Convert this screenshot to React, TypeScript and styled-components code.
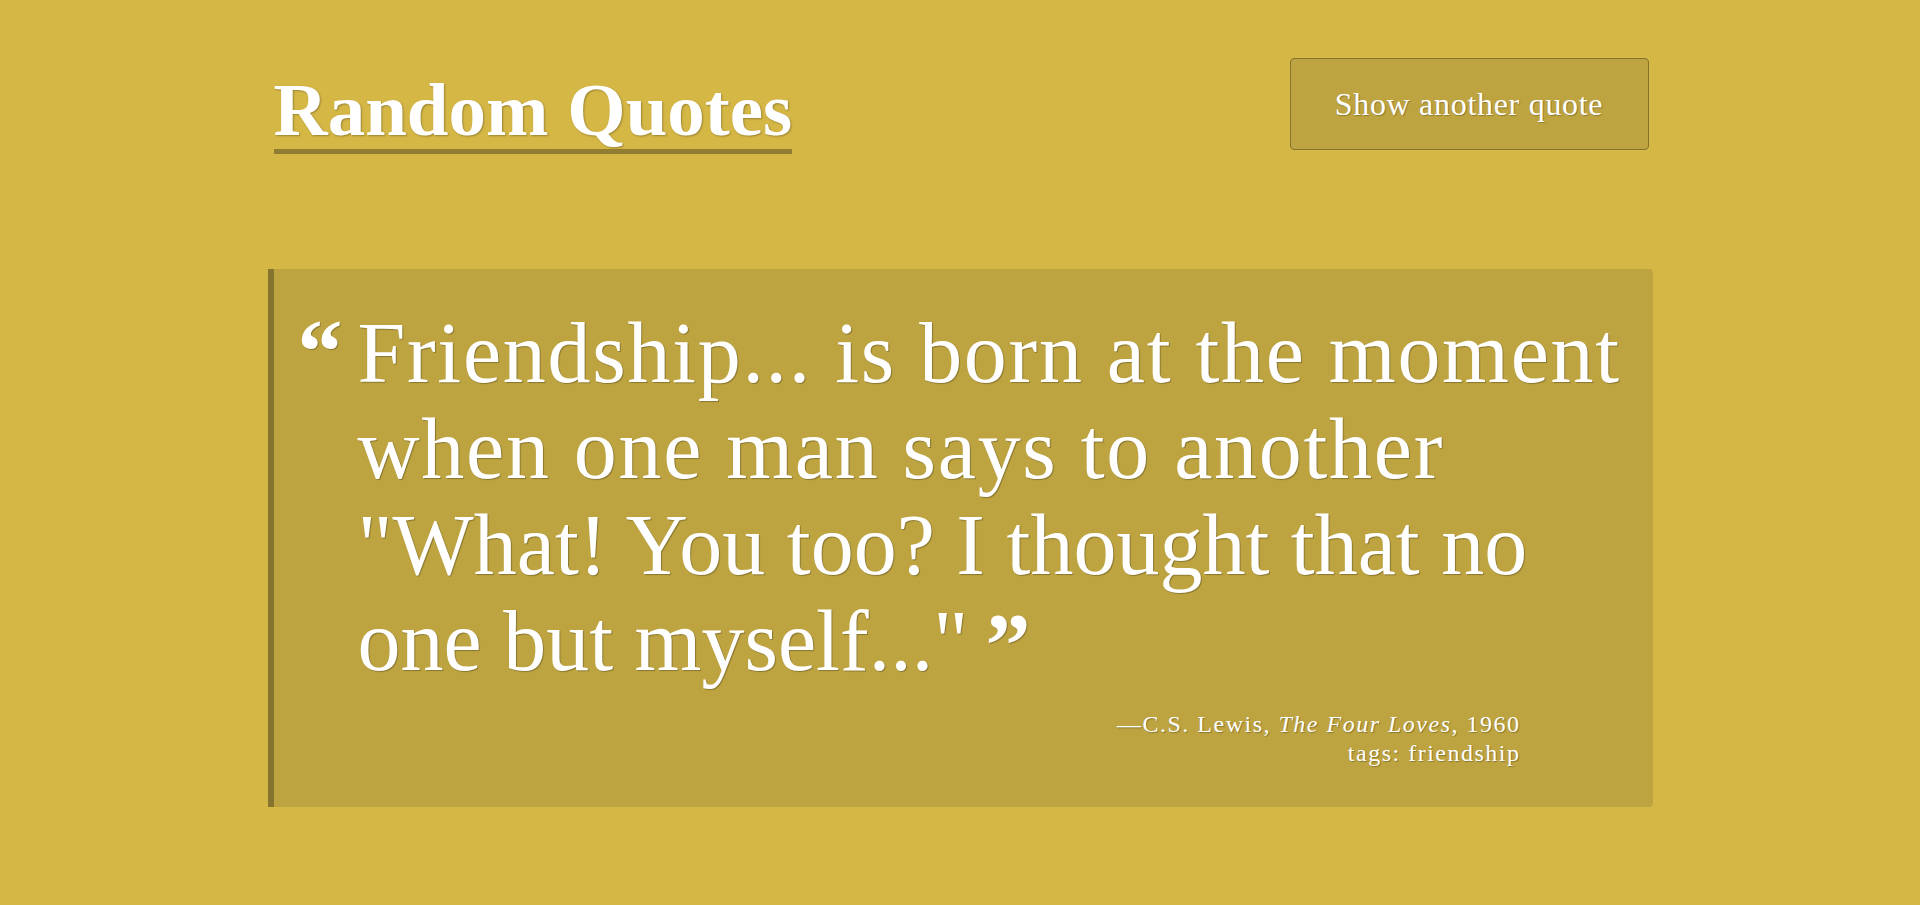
import React from "react";
import styled, { createGlobalStyle } from "styled-components";

const GlobalStyle = createGlobalStyle`
  html, body {
    margin: 0;
    padding: 0;
    background: #d5b746;
  }
  body {
    font-family: "Liberation Serif", "Times New Roman", serif;
    color: #ffffff;
  }
`;

const Page = styled.main`
  width: 1385px;
  margin: 0 auto;
  padding-top: 58px;
`;

const Header = styled.header`
  display: flex;
  justify-content: space-between;
  align-items: flex-start;
  padding: 0 4px 0 6px;
`;

const Title = styled.h1`
  margin: 12px 0 0;
  font-size: 75px;
  line-height: 79px;
  font-weight: 700;
  border-bottom: 5px solid #917d32;
  text-shadow: 1px 1px 2px rgba(0, 0, 0, 0.28);
`;

const NewQuoteButton = styled.button`
  width: 359px;
  height: 92px;
  background: #bea440;
  border: 1px solid #85722f;
  border-radius: 4px;
  color: #ffffff;
  font-family: "Liberation Serif", "Times New Roman", serif;
  font-size: 32px;
  letter-spacing: 0.7px;
  text-shadow: 1px 1px 1px rgba(0, 0, 0, 0.25);
  cursor: pointer;
  padding: 0;
`;

const QuoteCard = styled.figure`
  margin: 115px 0 0;
  background: #bea440;
  border-left: 6px solid #857330;
  border-radius: 0 4px 4px 0;
  padding: 36px 12px 39px 24px;
`;

const QuoteRow = styled.blockquote`
  display: flex;
  margin: 0;
`;

const OpenMark = styled.span`
  flex: none;
  width: 60px;
  font-size: 90px;
  line-height: 93px;
  font-weight: 700;
  text-shadow: 1px 1px 1px rgba(0, 0, 0, 0.25);
`;

const QuoteText = styled.p`
  flex: 1;
  margin: 0;
  font-size: 86px;
  line-height: 96px;
  letter-spacing: 1.7px;
  text-shadow: 1px 1px 1px rgba(0, 0, 0, 0.28);
`;

const Spoken = styled.span<{ $spacing: number }>`
  letter-spacing: ${(p) => p.$spacing}px;
`;

const CloseMark = styled.span`
  position: relative;
  top: 6px;
  margin-left: -6px;
  font-size: 90px;
  line-height: 0;
  font-weight: 700;
  letter-spacing: 0;
`;

const Attribution = styled.figcaption`
  margin: 21px 120px 0 0;
  text-align: right;
  font-size: 24px;
  line-height: 29px;
  letter-spacing: 1.5px;
  text-shadow: 1px 1px 1px rgba(0, 0, 0, 0.28);
`;

const Line = styled.div``;

export default function App() {
  return (
    <>
      <GlobalStyle />
      <Page>
        <Header>
          <Title>Random Quotes</Title>
          <NewQuoteButton type="button">Show another quote</NewQuoteButton>
        </Header>
        <QuoteCard>
          <QuoteRow>
            <OpenMark aria-hidden="true">“</OpenMark>
            <QuoteText>
              Friendship... is born at the moment when one man says to another{" "}
              <Spoken $spacing={0}>"What! You too? I thought that no one but myself..."</Spoken>{" "}
              <CloseMark aria-hidden="true">”</CloseMark>
            </QuoteText>
          </QuoteRow>
          <Attribution>
            <Line>
              —C.S. Lewis, <cite>The Four Loves</cite>, 1960
            </Line>
            <Line>tags: friendship</Line>
          </Attribution>
        </QuoteCard>
      </Page>
    </>
  );
}
